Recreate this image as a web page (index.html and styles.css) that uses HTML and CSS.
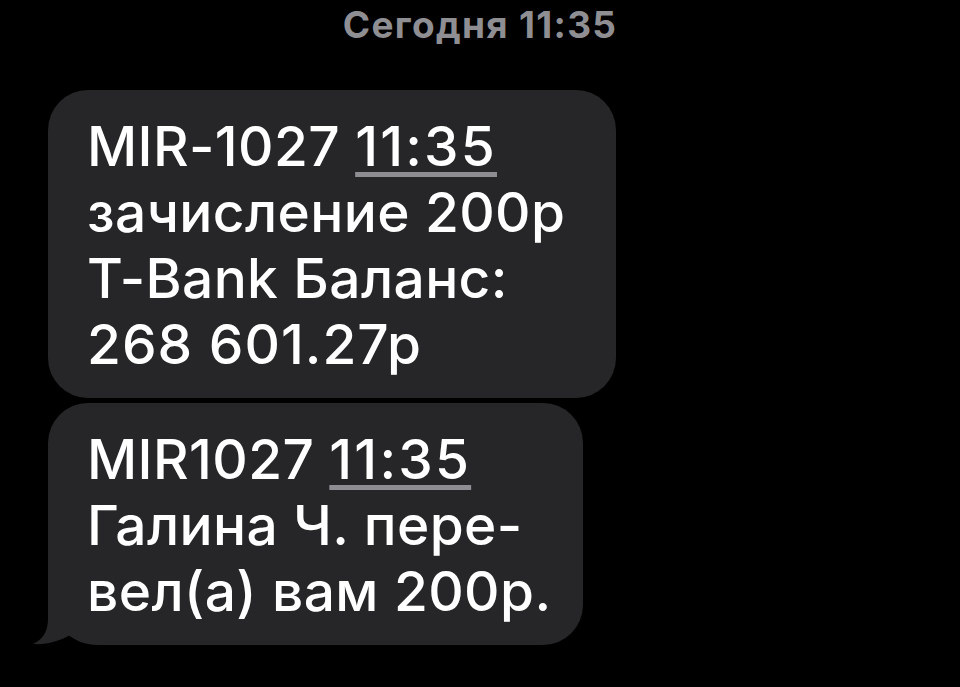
FILE: index.html
```html
<!DOCTYPE html>
<html lang="ru">
<head>
<meta charset="utf-8">
<title>Сообщения</title>
<link rel="stylesheet" href="styles.css">
</head>
<body>
<main class="thread">
  <div class="day">Сегодня 11:35</div>
  <div class="bubble bubble-first">
    <p class="msg">MIR-1027 <span class="link">11:35</span><br>зачисление 200р<br>T-Bank Баланс:<br><span class="num">268 601.27р</span></p>
  </div>
  <div class="bubble bubble-last">
    <p class="msg">MIR1027 <span class="link">11:35</span><br>Галина Ч. пере-<br>вел(а) вам 200р.</p>
    <svg class="tail" width="80" height="51" viewBox="0 0 80 51" aria-hidden="true">
      <path d="M16 0 L16 25 C16 38 10 46 1 50 C14 51 28 47 38 41 L38 20 Z" fill="#262629"/>
    </svg>
  </div>
</main>
</body>
</html>
```
FILE: styles.css
```css
html, body {
  margin: 0;
  padding: 0;
  background: #000;
}
body {
  width: 960px;
  height: 687px;
  overflow: hidden;
  font-family: Inter, "Noto Sans", sans-serif;
}
.thread {
  display: flex;
  flex-direction: column;
  align-items: flex-start;
  padding: 0 0 0 48px;
}
.day {
  align-self: stretch;
  margin-left: -48px;
  text-align: center;
  color: #8e8e93;
  font-size: 37px;
  font-weight: 700;
  letter-spacing: 1.3px;
  line-height: 50px;
  height: 50px;
  margin-bottom: 40px;
}
.bubble {
  position: relative;
  box-sizing: border-box;
  background: #262629;
  border-radius: 40px;
  padding: 23px 30px 21px 39px;
}
.bubble-first {
  width: 568px;
  margin-bottom: 5px;
}
.bubble-last {
  width: 535px;
  border-bottom-left-radius: 50px;
}
.msg {
  margin: 0;
  color: #fff;
  font-size: 55px;
  line-height: 66px;
  font-weight: 500;
  letter-spacing: 0.4px;
  white-space: nowrap;
}
.link {
  letter-spacing: 2.2px;
  text-decoration: underline;
  text-decoration-color: #8d8d92;
  text-decoration-thickness: 5px;
  text-underline-offset: 6px;
  text-decoration-skip-ink: none;
}
.num {
  letter-spacing: 1px;
}
.tail {
  position: absolute;
  left: -16px;
  bottom: 0;
  display: block;
}
```
